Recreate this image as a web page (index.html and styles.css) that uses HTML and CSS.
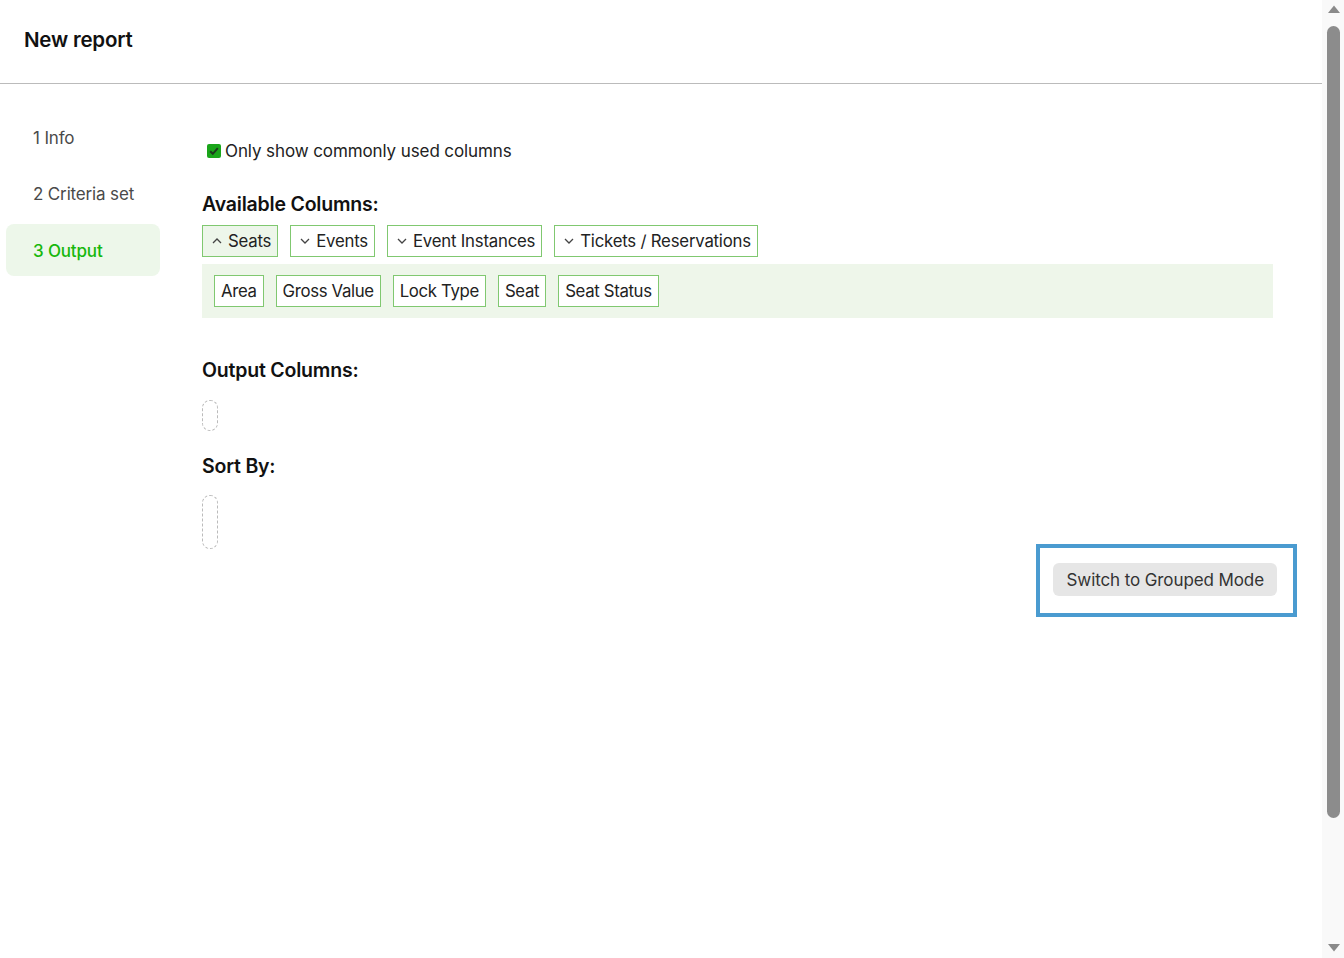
FILE: index.html
```html
<!DOCTYPE html>
<html lang="en">
<head>
<meta charset="utf-8">
<title>New report</title>
<link rel="stylesheet" href="styles.css">
</head>
<body>
<div class="app">
<div class="page">
  <header class="header">
    <h1 class="title">New report</h1>
  </header>
  <div class="body">
    <nav class="steps">
      <div class="step">1 Info</div>
      <div class="step">2 Criteria set</div>
      <div class="step active">3 Output</div>
    </nav>
    <main class="main">
      <label class="check">
        <span class="box"><svg viewBox="0 0 14 14" width="14" height="14"><path d="M3.2 7.2 L5.8 9.8 L10.8 4.2" fill="none" stroke="#1d3a1d" stroke-width="2"/></svg></span>
        <span>Only show commonly used columns</span>
      </label>
      <h2 class="heading avail">Available Columns:</h2>
      <div class="tabs">
        <button class="tab open"><svg class="chev" viewBox="0 0 10 10" width="10" height="10"><path d="M1 7 L5 3 L9 7" fill="none" stroke="#444" stroke-width="1.3"/></svg>Seats</button>
        <button class="tab"><svg class="chev" viewBox="0 0 10 10" width="10" height="10"><path d="M1 3 L5 7 L9 3" fill="none" stroke="#444" stroke-width="1.3"/></svg>Events</button>
        <button class="tab"><svg class="chev" viewBox="0 0 10 10" width="10" height="10"><path d="M1 3 L5 7 L9 3" fill="none" stroke="#444" stroke-width="1.3"/></svg>Event Instances</button>
        <button class="tab"><svg class="chev" viewBox="0 0 10 10" width="10" height="10"><path d="M1 3 L5 7 L9 3" fill="none" stroke="#444" stroke-width="1.3"/></svg>Tickets / Reservations</button>
      </div>
      <div class="panel">
        <span class="chip">Area</span>
        <span class="chip">Gross Value</span>
        <span class="chip">Lock Type</span>
        <span class="chip">Seat</span>
        <span class="chip">Seat Status</span>
      </div>
      <h2 class="heading output">Output Columns:</h2>
      <div class="drop small"></div>
      <h2 class="heading sort">Sort By:</h2>
      <div class="drop tall"></div>
      <div class="actions">
        <div class="focus-box">
          <button class="switch">Switch to Grouped Mode</button>
        </div>
      </div>
    </main>
  </div>
</div>
<div class="scrollbar" aria-hidden="true">
  <svg class="arrow" viewBox="0 0 14 12" width="14" height="12"><path d="M1 10 L7 2.5 L13 10 Z" fill="#8a8a8a"/></svg>
  <div class="thumb"></div>
  <div class="track-rest"></div>
  <svg class="arrow" viewBox="0 0 14 12" width="14" height="12"><path d="M1 2 L7 9.5 L13 2 Z" fill="#8a8a8a"/></svg>
</div>
</div>
</body>
</html>
```

FILE: styles.css
```css
html, body {
  margin: 0;
  padding: 0;
  background: #fff;
}
body {
  font-family: "Inter", "Noto Sans", sans-serif;
  color: #222;
}
.app {
  display: flex;
  height: 958px;
  overflow: hidden;
}
.page {
  flex: 1;
  min-width: 0;
}
.scrollbar {
  width: 22px;
  flex: none;
  background: #f9f9f9;
  display: flex;
  flex-direction: column;
  align-items: center;
  padding: 3px 0 4px 1px;
  box-sizing: border-box;
}
.arrow {
  flex: none;
}
.thumb {
  width: 13px;
  height: 792px;
  margin-top: 11px;
  border-radius: 7px;
  background: #8c8c8c;
  flex: none;
}
.track-rest {
  flex: 1;
}
.header {
  height: 83px;
  border-bottom: 1px solid #bbb;
  display: flex;
  align-items: center;
  padding-left: 24px;
}
.title {
  margin: 0;
  font-size: 20.5px;
  font-weight: 600;
  color: #111;
  letter-spacing: -0.2px;
  padding-bottom: 4px;
}
.body {
  display: flex;
  padding-top: 28px;
}
.steps {
  width: 154px;
  margin-left: 6px;
  display: flex;
  flex-direction: column;
  gap: 4px;
}
.step {
  height: 52px;
  display: flex;
  align-items: center;
  padding-left: 27px;
  font-size: 17px;
  color: #4a4a4a;
  border-radius: 8px;
  letter-spacing: -0.15px;
}
.step.active {
  background: #edf7ea;
  color: #17b80c;
  font-weight: 500;
  padding-top: 1px;
  box-sizing: border-box;
}
.main {
  margin-left: 42px;
  width: 1071px;
}
.check {
  display: flex;
  align-items: center;
  gap: 4px;
  margin-top: 29px;
  margin-left: 5px;
  font-size: 17px;
  color: #222;
  letter-spacing: -0.1px;
  height: 20px;
}
.box {
  width: 14px;
  height: 14px;
  border-radius: 2px;
  background: #1aa51a;
  display: inline-flex;
}
.heading {
  margin: 0;
  font-size: 19.5px;
  font-weight: 600;
  color: #111;
  letter-spacing: -0.2px;
  line-height: 24px;
}
.avail {
  margin-top: 31px;
}
.tabs {
  display: flex;
  gap: 12px;
  margin-top: 9px;
}
.tab {
  height: 32px;
  display: inline-flex;
  align-items: center;
  gap: 6px;
  padding: 0 6px 0 9px;
  border: 1px solid #80c870;
  background: #fff;
  font-family: inherit;
  font-size: 16.8px;
  color: #222;
  letter-spacing: -0.22px;
}
.tab.open {
  background: #edf6ea;
}
.chev {
  flex: none;
}
.panel {
  margin-top: 7px;
  background: #eef6ea;
  padding: 11px 12px;
  display: flex;
  gap: 12px;
}
.chip {
  height: 32px;
  display: inline-flex;
  align-items: center;
  padding: 0 6px;
  box-sizing: border-box;
  border: 1px solid #80c870;
  background: #fff;
  font-size: 16.8px;
  color: #222;
  letter-spacing: -0.35px;
}
.output {
  margin-top: 40px;
}
.drop {
  width: 16px;
  border: 1px dashed #bbb;
  border-radius: 8px;
  box-sizing: border-box;
}
.drop.small {
  height: 31px;
  margin-top: 18px;
}
.sort {
  margin-top: 23px;
}
.drop.tall {
  height: 54px;
  margin-top: 17px;
}
.actions {
  display: flex;
  justify-content: flex-end;
  margin-right: -24px;
  margin-top: -5px;
}
.focus-box {
  border: 4px solid #4a9bd0;
  padding: 15px 16px 17px 13px;
}
.switch {
  height: 33px;
  padding: 0 13px 0 14px;
  border: none;
  border-radius: 6px;
  background: #e6e6e6;
  font-family: inherit;
  font-size: 17px;
  color: #333;
  letter-spacing: -0.1px;
}
```
